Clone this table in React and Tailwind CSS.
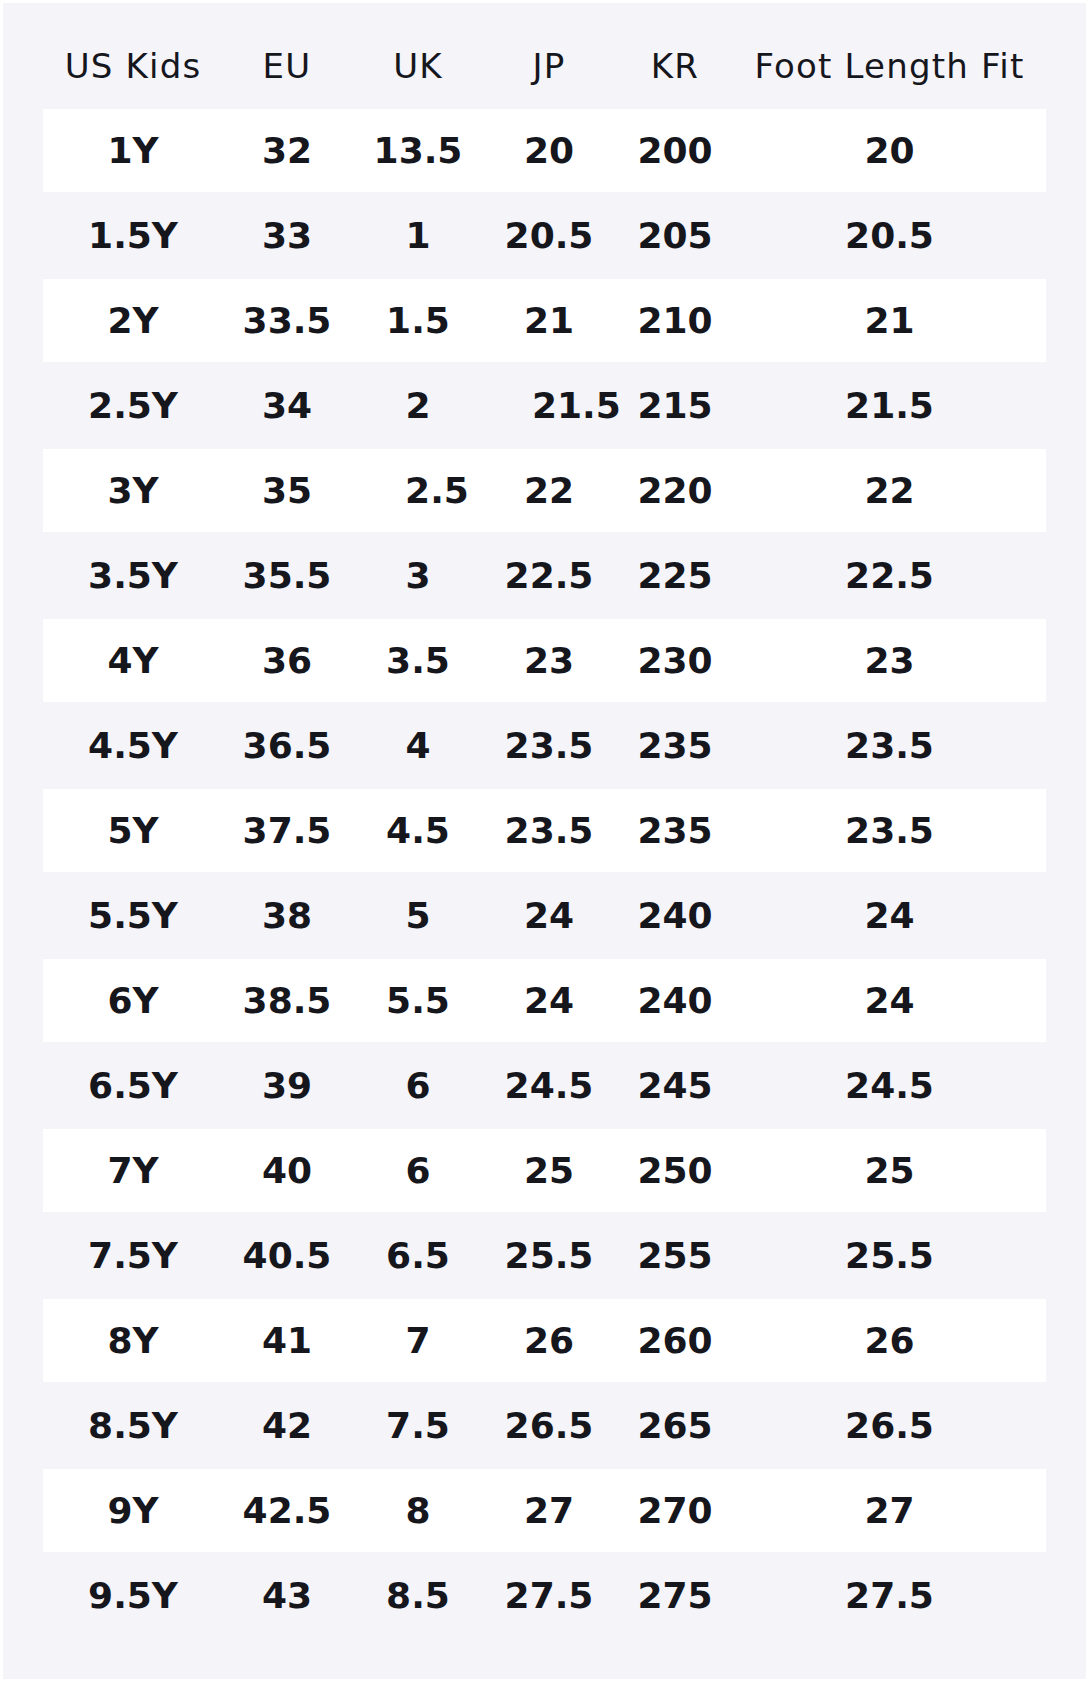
import React from "react";

const cols = ["US Kids", "EU", "UK", "JP", "KR", "Foot Length Fit"];

const rows = [
  ["1Y", "32", "13.5", "20", "200", "20"],
  ["1.5Y", "33", "1", "20.5", "205", "20.5"],
  ["2Y", "33.5", "1.5", "21", "210", "21"],
  ["2.5Y", "34", "2", "21.5", "215", "21.5"],
  ["3Y", "35", "2.5", "22", "220", "22"],
  ["3.5Y", "35.5", "3", "22.5", "225", "22.5"],
  ["4Y", "36", "3.5", "23", "230", "23"],
  ["4.5Y", "36.5", "4", "23.5", "235", "23.5"],
  ["5Y", "37.5", "4.5", "23.5", "235", "23.5"],
  ["5.5Y", "38", "5", "24", "240", "24"],
  ["6Y", "38.5", "5.5", "24", "240", "24"],
  ["6.5Y", "39", "6", "24.5", "245", "24.5"],
  ["7Y", "40", "6", "25", "250", "25"],
  ["7.5Y", "40.5", "6.5", "25.5", "255", "25.5"],
  ["8Y", "41", "7", "26", "260", "26"],
  ["8.5Y", "42", "7.5", "26.5", "265", "26.5"],
  ["9Y", "42.5", "8", "27", "270", "27"],
  ["9.5Y", "43", "8.5", "27.5", "275", "27.5"],
];

// a couple of cells sit off-centre in the source chart
const nudge = {
  "3-3": "pl-[47px]",
  "4-2": "pl-[38px]",
};

const grid = "grid grid-cols-[180px_128px_134px_128px_124px_305px_1fr] items-center";

export default function App() {
  return (
    <div className="bg-white p-[3px]" style={{ fontFamily: '"DejaVu Sans", sans-serif' }}>
      <div className="bg-[#f4f4f9] px-[40px] pt-[40px] pb-[41px] text-[#16161d]">
        <div className={`${grid} h-[46px] mb-[20px] text-[34px] tracking-[1.2px] leading-none`}>
          {cols.map((c) => (
            <div key={c} className="text-center whitespace-nowrap">
              {c}
            </div>
          ))}
        </div>

        {rows.map((r, i) => (
          <div
            key={r[0]}
            className={
              i % 2 === 0
                ? `${grid} h-[83px] my-px bg-white`
                : `${grid} h-[85px]`
            }
          >
            {r.map((v, j) => (
              <div
                key={j}
                className={`text-center text-[36px] font-bold leading-none whitespace-nowrap ${nudge[`${i}-${j}`] || ""}`}
              >
                {v}
              </div>
            ))}
          </div>
        ))}
      </div>
    </div>
  );
}
